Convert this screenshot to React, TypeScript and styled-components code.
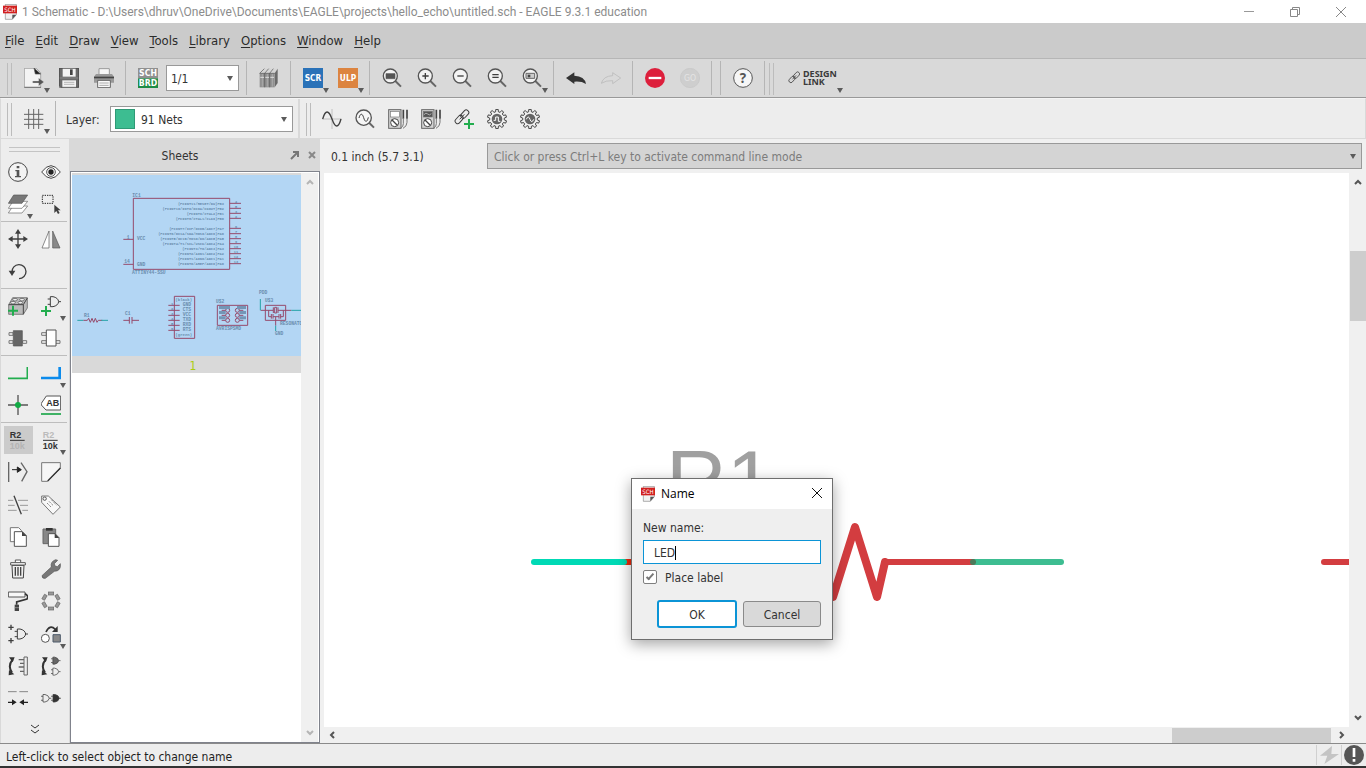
import React from "react";
import styled, { createGlobalStyle, css } from "styled-components";

const UI = `"DejaVu Sans Condensed", "DejaVu Sans", sans-serif`;
const TITLE = `Roboto, "Open Sans", sans-serif`;

const GlobalStyle = createGlobalStyle`
  *, *::before, *::after { box-sizing: border-box; }
  body { margin: 0; background: #efefef; font-family: ${UI}; font-size: 12px; color: #333; }
  button, input, select { font: inherit; color: inherit; margin: 0; padding: 0; border: 0; background: none; border-radius: 0; outline: 0; }
  svg { display: block; }
`;

/* ---------- window frame ---------- */
const Window = styled.div`
  min-height: 100vh;
  display: flex;
  flex-direction: column;
`;
const TitleBar = styled.header`
  height: 23px;
  display: flex;
  align-items: center;
  background: #fff;
  padding-left: 3px;
`;
const TitleText = styled.h1`
  flex: 1;
  margin: 0 0 0 5px;
  font: 12px/16px ${TITLE};
  color: #8c8c8c;
  white-space: nowrap;
`;
const WindowButton = styled.button`
  width: 46px;
  height: 22px;
  padding-right: 4px;
  display: grid;
  place-items: center;
`;
const MenuBar = styled.nav`
  height: 36px;
  display: flex;
  align-items: center;
  gap: 11px;
  padding-left: 5px;
  background: #cbcbcb;
  border-bottom: 1px solid #b6b6b6;
`;
const MenuButton = styled.button`
  font-size: 13px;
  line-height: 20px;
  color: #2b2b2b;
  u { text-underline-offset: 2px; }
`;

/* ---------- toolbars ---------- */
const MainToolbar = styled.div`
  height: 39px;
  display: flex;
  align-items: stretch;
  padding-left: 7px;
  background: #d9d9d9;
  border-bottom: 1px solid #999;
`;
const LayerToolbar = styled.div`
  height: 41px;
  display: flex;
  align-items: stretch;
  background: #ededed;
  border: 1px solid #d9d9d9;
  border-top-color: #f4f4f4;
`;
const LayerSection = styled.div`
  display: flex;
  align-items: stretch;
  padding: 0 5px 0 6px;
  border-right: 2px solid #d9d9d9;
`;
const WaveSection = styled.div`
  display: flex;
  padding-left: 6px;
`;
const Handle = styled.i`
  width: 5px;
  margin: 4px 4px 2px 0;
  border: solid #bcbcbc;
  border-width: 0 1px;
`;
const Divider = styled.i`
  width: 1px;
  margin: 2px 4px;
  background: #b5b5b5;
`;
const IconButton = styled.button<{ $w?: number; $h?: number; $on?: boolean }>`
  position: relative;
  width: ${(p) => p.$w ?? 35}px;
  height: ${(p) => (p.$h ? `${p.$h}px` : "auto")};
  padding-left: ${(p) => (p.$w ? 7 : 8)}px;
  display: flex;
  align-items: center;
  ${(p) =>
    p.$on &&
    css`
      margin: 2px 0 2px 3px;
      width: 29px;
      height: 28px;
      padding-left: 4px;
      background: #cbcbcb;
    `}
`;
const Drop = styled.i<{ $low?: boolean }>`
  position: absolute;
  right: 1px;
  bottom: ${(p) => (p.$low ? 1 : 4)}px;
  border: solid transparent;
  border-width: 5px 3px 0;
  border-top-color: #5b5b5b;
`;
const SelectFrame = styled.div<{ $w: number }>`
  position: relative;
  align-self: center;
  width: ${(p) => p.$w}px;
  height: 26px;
  display: flex;
  align-items: center;
  gap: 6px;
  padding-left: 4px;
  background: #fff;
  border: 1px solid #999;
`;
const SheetFrame = styled(SelectFrame)`
  margin: 0 3px 0 1px;
`;
const Select = styled.select`
  flex: 1;
  min-width: 0;
  height: 24px;
  padding-top: 2px;
  appearance: none;
  font-size: 12px;
`;
const SelectArrow = styled.i`
  position: absolute;
  right: 5px;
  top: 10px;
  border: solid transparent;
  border-width: 5px 3px 0;
  border-top-color: #5b5b5b;
  pointer-events: none;
`;
const Swatch = styled.i`
  width: 20px;
  height: 20px;
  background: #3dbd91;
  border: 1px solid #2f9a76;
`;
const LayerLabel = styled.label`
  align-self: center;
  width: 50px;
  padding: 2px 0 0 6px;
`;
const DesignLink = styled.button`
  position: relative;
  display: flex;
  align-items: center;
  gap: 3px;
  width: 66px;
  padding-left: 10px;
  font: bold 9px/8px "Noto Sans", sans-serif;
  text-align: left;
  color: #3b3b3b;
`;

/* ---------- work area ---------- */
const Work = styled.main`
  flex: 1;
  display: flex;
  align-items: stretch;
`;
const Palette = styled.aside`
  width: 70px;
  display: flex;
  flex-direction: column;
  padding: 8px 2px 0 0;
  background: #ededed;
  border: solid #d9d9d9;
  border-width: 0 1px;
`;
const PaletteHandle = styled.i`
  height: 5px;
  margin: 0 7px 4px 8px;
  border: solid #c4c4c4;
  border-width: 1px 0;
`;
const ToolGroup = styled.div<{ $last?: boolean }>`
  display: grid;
  grid-template-columns: 33px 33px;
  grid-auto-rows: 32px;
  ${(p) =>
    p.$last
      ? css`
          flex: 1;
          align-content: space-between;
        `
      : css`
          padding-bottom: 1px;
          border-bottom: 1px solid #bdbdbd;
          margin-bottom: 1px;
        `}
`;
const MoreButton = styled.button`
  height: 29px;
  padding-left: 2px;
  display: grid;
  place-items: center;
`;
const SheetsPanel = styled.section`
  width: 250px;
  display: flex;
  flex-direction: column;
`;
const SheetsHeader = styled.div`
  height: 32px;
  display: flex;
  align-items: center;
  gap: 7px;
  padding-right: 3px;
  background: #d9d9d9;
`;
const SheetsTitle = styled.h2`
  flex: 1;
  margin: 0;
  padding: 2px 0 0 7px;
  font: 12px/16px ${UI};
  text-align: center;
`;
const SmallButton = styled.button`
  width: 10px;
  height: 10px;
`;
const SheetsBody = styled.div`
  flex: 1;
  display: flex;
  background: #fff;
  border: 1px solid #80838c;
  padding: 1px 1px 0 1px;
`;
const SheetList = styled.div`
  flex: 1;
`;
const Thumbnail = styled.svg`
  width: 100%;
  height: auto;
  background: #b3d6f4;
  border-top: 2px solid #d9d9d9;
`;
const SheetNumber = styled.div`
  height: 17px;
  background: #d9d9d9;
  color: #a9cc10;
  font-size: 12px;
  line-height: 20px;
  text-align: center;
  padding-left: 13px;
`;
const Track = styled.div<{ $row?: boolean }>`
  display: flex;
  flex-direction: ${(p) => (p.$row ? "row" : "column")};
  align-items: center;
  justify-content: space-between;
  background: #f0f0f0;
  ${(p) => (p.$row ? "height: 16px; padding: 0 21px 0 4px;" : "width: 17px; padding: 5px 0 6px;")}
`;
const ThumbY = styled.div`
  width: 16px;
  height: 70px;
  margin: 65px 0 auto;
  background: #cdcdcd;
`;
const ThumbX = styled.div`
  width: 159px;
  height: 15px;
  margin: 0 6px 0 auto;
  background: #cdcdcd;
`;
const Editor = styled.section`
  flex: 1;
  min-width: 0;
  display: flex;
  flex-direction: column;
  padding-left: 4px;
  background: #f0f0f0;
`;
const CommandRow = styled.div`
  height: 34px;
  display: flex;
  align-items: center;
  padding: 0 4px 0 7px;
`;
const Coordinates = styled.output`
  width: 156px;
  padding-top: 2px;
`;
const CommandBox = styled.div`
  position: relative;
  flex: 1;
  height: 26px;
  display: flex;
  background: #d4d4d4;
  border: 1px solid #999;
`;
const CommandInput = styled.input`
  flex: 1;
  padding: 2px 0 0 6px;
  &::placeholder { color: #7c7c7c; opacity: 1; }
`;
const CanvasRow = styled.div`
  flex: 1;
  display: flex;
`;
const Canvas = styled.div`
  position: relative;
  flex: 1;
  min-width: 0;
  min-height: 500px;
  background: #fff;
`;
const Drawing = styled.svg`
  position: absolute;
  inset: 0;
  width: 100%;
  height: 100%;
`;

/* ---------- dialog ---------- */
const Dialog = styled.form`
  position: absolute;
  left: 307px;
  top: 305px;
  width: 202px;
  background: #efefef;
  border: 1px solid #6e6e6e;
  box-shadow: 0 4px 14px rgba(0, 0, 0, 0.36);
`;
const DialogTitle = styled.div`
  height: 30px;
  display: flex;
  align-items: center;
  gap: 6px;
  padding: 0 9px;
  background: #fff;
  color: #000;
  h2 { flex: 1; margin: 0; font: 12px/16px "Open Sans", sans-serif; }
`;
const CloseButton = styled.button`
  width: 12px;
  height: 12px;
  margin-bottom: 2px;
`;
const DialogBody = styled.div`
  display: flex;
  flex-direction: column;
  padding: 11px 11px 11px;
`;
const FieldLabel = styled.label`
  line-height: 16px;
  margin-bottom: 4px;
`;
const NameField = styled.div`
  height: 24px;
  display: flex;
  align-items: center;
  padding: 1px 0 0 10px;
  background: #fff;
  border: 1px solid #0b94d6;
`;
const NameInput = styled.input`
  field-sizing: content;
  caret-color: transparent;
`;
const TextCaret = styled.i`
  width: 1px;
  height: 14px;
  background: #000;
`;
const CheckRow = styled.label`
  display: flex;
  align-items: center;
  gap: 8px;
  height: 26px;
  line-height: 14px;
`;
const CheckText = styled.span`
  padding-top: 1px;
`;
const CheckBox = styled.input`
  appearance: none;
  width: 14px;
  height: 14px;
  display: grid;
  place-items: center;
  background: #fff;
  border: 1px solid #7f7f7f;
  border-radius: 2px;
  &:checked::after {
    content: "";
    width: 4px;
    height: 8px;
    margin-bottom: 2px;
    border: solid #777;
    border-width: 0 2px 2px 0;
    transform: rotate(42deg);
  }
`;
const Buttons = styled.div`
  display: flex;
  align-items: center;
  justify-content: flex-end;
  gap: 6px;
  padding-top: 10px;
`;
const DialogButton = styled.button<{ $primary?: boolean }>`
  width: ${(p) => (p.$primary ? 80 : 78)}px;
  height: ${(p) => (p.$primary ? 28 : 26)}px;
  padding-top: 2px;
  border: ${(p) => (p.$primary ? "2px solid #0b94d6" : "1px solid #8a8a8a")};
  border-radius: 3px;
  background: ${(p) => (p.$primary ? "#fff" : "#d9d9d9")};
`;

/* ---------- status bar ---------- */
const StatusBar = styled.footer`
  height: 25px;
  display: flex;
  align-items: center;
  padding-left: 6px;
  background: #ededed;
  border-top: 1px solid #8a8a8a;
  border-bottom: 2px solid #333;
`;
const StatusText = styled.span`
  flex: 1;
  padding-top: 3px;
  color: #1f1f1f;
`;
const StatusCell = styled.span`
  width: 25px;
  height: 20px;
  display: grid;
  place-items: center;
  border-left: 1px solid #d0d0d0;
`;

/* ---------- icons, all on a 60 unit grid ---------- */
const D = "#3f3f3f";
const G = "#22ad4e";

const gear = (r1: number, r2: number, n = 10) => {
  const pts: string[] = [];
  for (let i = 0; i < n; i++) {
    [[-0.3, r1], [-0.2, r2], [0.2, r2], [0.3, r1]].forEach(([o, r]) => {
      const a = ((i + o) / n) * Math.PI * 2;
      pts.push(`${30 + Math.sin(a) * r},${30 - Math.cos(a) * r}`);
    });
  }
  return pts.join(" ");
};

const Lens = ({ children }: { children?: React.ReactNode }) => (
  <>
    <path d="M40 39L57 56" stroke="#666" strokeWidth="6" />
    <circle cx="25" cy="24" r="21" fill="#f3f3f3" stroke="#555" strokeWidth="4" />
    {children}
  </>
);
const Chain = () => (
  <g fill="none" stroke={D} strokeWidth="3">
    <rect x="18" y="8" width="28" height="15" rx="7" transform="rotate(-48 32 15)" />
    <rect x="1" y="24" width="28" height="15" rx="7" transform="rotate(-48 15 31)" />
    <path d="M17 31L31 16" />
  </g>
);
const Meter = ({ screen }: { screen: string }) => (
  <>
    <rect x="2" y="2" width="37" height="56" fill="#d4d4d4" stroke="#666" strokeWidth="3" />
    <rect x="7" y="7" width="27" height="17" fill={screen} stroke="#777" strokeWidth="2" />
    <circle cx="20" cy="41" r="12" fill="#fff" stroke="#444" strokeWidth="3" />
    <path d="M12 33L28 49" stroke="#444" strokeWidth="4" />
    <path d="M46 2v27M57 2v27" stroke="#444" strokeWidth="5" />
    <path d="M46 28v16q0 10-8 13M57 28v12q0 12-12 18" fill="none" stroke="#777" strokeWidth="3" />
  </>
);
const Gate = ({ x, y, s = 1, fill = "none" }: { x: number; y: number; s?: number; fill?: string }) => (
  <g transform={`translate(${x} ${y}) scale(${s})`} fill={fill} stroke={D} strokeWidth="3">
    <path d="M8 2h8q15 3 17 15q-2 12-17 15h-8z" />
    <path d="M0 9h8M0 25h8M33 17h8" />
  </g>
);

const icons: Record<string, React.ReactNode> = {
  open: (
    <>
      <path d="M1 1h36l13 13v44H1z" fill="#f4f4f4" stroke="#8a8a8a" strokeWidth="2" />
      <path d="M30 0l20 18H34zM1 58h50" fill="#222" stroke="#555" strokeWidth="2" />
      <path d="M26 39h18v-9l16 12-16 12v-9H26z" fill="#555" stroke="#e8e8e8" strokeWidth="1" />
    </>
  ),
  save: (
    <>
      <path d="M0 0h60v59H6l-6-6z" fill="#6a6a6a" />
      <path d="M11 1h39v25H11z" fill="#f2f2f2" />
      <path d="M33 4h8v17h-8z" fill="#444" />
      <path d="M10 37h41v21H10z" fill="#f2f2f2" />
      <path d="M0 30h60M15 43h31M15 49h31" stroke="#999" strokeWidth="2" />
      <path d="M1 1h58v57H1z" fill="none" stroke="#444" strokeWidth="2" />
    </>
  ),
  print: (
    <>
      <path d="M15 2h31v18H15z" fill="#f8f8f8" stroke="#999" strokeWidth="3" />
      <path d="M6 18h48l6 8v18H0V26z" fill="#999" />
      <path d="M0 26h60v5H0z" fill="#444" />
      <path d="M11 37h38v22H11z" fill="#fafafa" stroke="#666" strokeWidth="3" />
      <path d="M16 45h28M16 52h28" stroke="#aaa" strokeWidth="3" />
    </>
  ),
  board: (
    <>
      <path d="M0 0h60v31H0z" fill="#909090" />
      <path d="M0 31h60v29H0z" fill="#1e8c45" />
      <g fill="#fff" fontFamily="DejaVu Sans Condensed" fontSize="26" fontWeight="bold" textAnchor="middle">
        <text x="30" y="25">SCH</text>
        <text x="30" y="55">BRD</text>
      </g>
    </>
  ),
  books: (
    <>
      <path d="M2 16L16 2h40l-9 14z" fill="#d5d5d5" />
      <path d="M47 16l9-14v43l-9 13z" fill="#6a6a6a" />
      <path d="M2 16h45v42H2z" fill="#909090" />
      <path d="M2 16h45M17 16v42M32 16v42M17 16L29 2M32 16L43 2M2 16L16 2" fill="none" stroke="#555" strokeWidth="2" />
      <path d="M10 18v38M25 18v38M40 18v38" stroke="#aaa" strokeWidth="3" />
      <path d="M4 28h11M19 28h11M34 28h11" stroke="#ddd" strokeWidth="3" />
    </>
  ),
  scr: (
    <>
      <path d="M0 0h60v60H0z" fill="#2a72b8" />
      <text x="30" y="39" fill="#fff" fontFamily="DejaVu Sans Condensed" fontSize="25" fontWeight="bold" textAnchor="middle">SCR</text>
    </>
  ),
  ulp: (
    <>
      <path d="M0 0h60v60H0z" fill="#dc8440" />
      <text x="30" y="39" fill="#fff" fontFamily="DejaVu Sans Condensed" fontSize="25" fontWeight="bold" textAnchor="middle">ULP</text>
    </>
  ),
  fit: <Lens><path d="M12 17h27v15H12z" fill="#555" stroke="#555" strokeWidth="2" /></Lens>,
  zoomIn: <Lens><path d="M16 24h19M25 15v19" stroke={D} strokeWidth="4" /></Lens>,
  zoomOut: <Lens><path d="M16 24h19" stroke={D} strokeWidth="4" /></Lens>,
  redraw: <Lens><path d="M16 20h19M16 28h19" stroke={D} strokeWidth="4" /></Lens>,
  zoomSel: (
    <Lens>
      <path d="M12 16h26v15H12z" fill="#ccc" stroke="#666" strokeWidth="3" />
      <path d="M17 20h8v8h-8z" fill="#444" />
    </Lens>
  ),
  undo: <path d="M0 30L25 13v10q31 1 35 25q-14-9-35-7v7z" fill="#333" />,
  redo: <path d="M59 30L35 14v9Q7 24 1 46q13-9 34-8v9z" fill="none" stroke="#b4b4b4" strokeWidth="2" />,
  stop: (
    <>
      <circle cx="30" cy="30" r="30" fill="#dd1f3c" />
      <path d="M11 30h38" stroke="#fff" strokeWidth="7" />
    </>
  ),
  go: (
    <>
      <circle cx="30" cy="30" r="29" fill="#cecece" stroke="#c6c6c6" strokeWidth="2" />
      <text x="30" y="39" fill="#e4e4e4" fontFamily="DejaVu Sans Condensed" fontSize="26" textAnchor="middle">GO</text>
    </>
  ),
  help: (
    <>
      <circle cx="30" cy="30" r="28" fill="#f6f6f6" stroke="#555" strokeWidth="3" />
      <text x="30" y="44" fill="#555" fontFamily="Noto Sans" fontSize="40" fontWeight="bold" textAnchor="middle">?</text>
    </>
  ),
  grid: <path d="M0 16h58M0 31h58M0 46h58M14 0v60M29 0v60M44 0v60" stroke="#666" strokeWidth="3" />,
  sine: (
    <>
      <path d="M1 30h58M30 0v60" stroke="#aaa" strokeWidth="2" />
      <path d="M2 30C10 2 20 2 30 30S49 58 57 30" fill="none" stroke={D} strokeWidth="4" />
    </>
  ),
  probe: (
    <>
      <path d="M43 42L57 56" stroke="#666" strokeWidth="6" />
      <circle cx="26" cy="26" r="23" fill="#f6f6f6" stroke="#555" strokeWidth="4" />
      <path d="M12 27C16 12 22 12 26 26S36 42 40 25" fill="none" stroke={D} strokeWidth="3" />
    </>
  ),
  meter: <Meter screen="#fff" />,
  meterWave: (
    <>
      <Meter screen="#555" />
      <path d="M9 17q6-8 11-2t11-1" fill="none" stroke="#ddd" strokeWidth="2" />
    </>
  ),
  linkAdd: (
    <>
      <Chain />
      <path d="M30 45h30M45 30v30" stroke={G} strokeWidth="6" />
    </>
  ),
  gearStep: (
    <>
      <polygon points={gear(22, 29)} fill="#f0f0f0" stroke="#444" strokeWidth="3" />
      <circle cx="30" cy="30" r="16" fill="#666" />
      <path d="M20 34h6V24h8v13h6" fill="none" stroke="#fff" strokeWidth="3" />
    </>
  ),
  gearWave: (
    <>
      <polygon points={gear(22, 29)} fill="#f0f0f0" stroke="#444" strokeWidth="3" />
      <circle cx="30" cy="30" r="16" fill="#666" />
      <path d="M19 31q6-14 11 0t11 0" fill="none" stroke="#fff" strokeWidth="3" />
    </>
  ),
  info: (
    <>
      <circle cx="30" cy="30" r="28" fill="#f3f3f3" stroke="#444" strokeWidth="3" />
      <path d="M26 12h8v7h-8zM22 24h12v18h5v4H21v-4h5V28h-4z" fill="#555" />
    </>
  ),
  eye: (
    <>
      <path d="M2 30Q30-8 58 30Q30 68 2 30z" fill="#f8f8f8" stroke="#444" strokeWidth="3" />
      <circle cx="30" cy="30" r="13" fill="none" stroke="#555" strokeWidth="3" />
      <circle cx="30" cy="30" r="8" fill="#222" />
    </>
  ),
  layers: (
    <g stroke="#666" strokeWidth="2">
      <path d="M1 57L15 36h44L42 57z" fill="#fff" />
      <path d="M1 43L15 22h44L42 43z" fill="#fff" />
      <path d="M1 28L17 3h42L42 28z" fill="#777" stroke="#555" />
    </g>
  ),
  group: (
    <>
      <path d="M4 4h32v24H4z" fill="none" stroke="#222" strokeWidth="3" strokeDasharray="4 3" />
      <path d="M40 32v25l6-6 5 9 5-3-5-8h8z" fill={D} />
    </>
  ),
  move: (
    <>
      <path d="M30 8v44M8 30h44" stroke={D} strokeWidth="4" />
      <path d="M30 0l9 14H21zM30 60l9-14H21zM0 30l14-9v18zM60 30l-14-9v18z" fill={D} />
    </>
  ),
  mirror: (
    <>
      <path d="M3 57L24 6v51z" fill="#fff" stroke="#555" strokeWidth="2" />
      <path d="M57 57L35 6v51z" fill="#888" stroke="#555" strokeWidth="2" />
    </>
  ),
  rotate: (
    <>
      <path d="M12 33a21 21 0 1 1 21 20" fill="none" stroke={D} strokeWidth="4" />
      <path d="M2 29h20L12 45z" fill={D} />
    </>
  ),
  addPart: (
    <>
      <path d="M2 26L14 5h44v31L46 55H2z" fill="#bbb" stroke="#555" strokeWidth="2" />
      <path d="M2 26h44v29M46 26L58 6" fill="none" stroke="#444" strokeWidth="3" />
      <ellipse cx="21" cy="11" rx="7" ry="4" fill="#eee" stroke="#444" strokeWidth="2" />
      <ellipse cx="42" cy="11" rx="7" ry="4" fill="#eee" stroke="#444" strokeWidth="2" />
      <ellipse cx="15" cy="20" rx="7" ry="4" fill="#eee" stroke="#444" strokeWidth="2" />
      <ellipse cx="37" cy="20" rx="7" ry="4" fill="#eee" stroke="#444" strokeWidth="2" />
      <path d="M0 44h30M15 29v30" stroke={G} strokeWidth="6" />
    </>
  ),
  addGate: (
    <>
      <Gate x={20} y={0} />
      <path d="M0 45h30M15 30v30" stroke={G} strokeWidth="6" />
    </>
  ),
  chip: (
    <>
      <path d="M3 14h12v8H3zM3 38h12v8H3zM44 38h12v8H44z" fill="none" stroke="#777" strokeWidth="3" />
      <path d="M16 8h27v46H16z" fill="#666" stroke="#555" strokeWidth="2" />
    </>
  ),
  chipOutline: (
    <>
      <path d="M2 14h14v8H2zM2 38h14v8H2zM44 38h13v8H44z" fill="none" stroke="#777" strokeWidth="3" />
      <path d="M16 6h29v48H16z" fill="#fff" stroke="#555" strokeWidth="3" />
    </>
  ),
  net: <path d="M0 46h58V12" fill="none" stroke={G} strokeWidth="5" />,
  bus: <path d="M0 45h56V12" fill="none" stroke="#0c8bec" strokeWidth="8" />,
  junction: (
    <>
      <path d="M0 30h60M30 0v60" stroke="#555" strokeWidth="4" />
      <circle cx="30" cy="30" r="9" fill="#12ab45" />
    </>
  ),
  label: (
    <>
      <path d="M1 25L16 3h43v42H15L1 30z" fill="#fff" stroke="#555" strokeWidth="3" />
      <text x="35" y="34" fill="#333" fontFamily="Liberation Sans" fontSize="27" fontWeight="bold" textAnchor="middle">AB</text>
      <path d="M0 57h60" stroke="#1ca64a" strokeWidth="5" />
    </>
  ),
  name: (
    <g fontFamily="Liberation Sans" fontSize="27" fontWeight="bold">
      <text x="5" y="25" fill="#333">R2</text>
      <path d="M6 31h44" stroke="#333" strokeWidth="3" />
      <text x="5" y="56" fill="#b4b4b4">10k</text>
    </g>
  ),
  value: (
    <g fontFamily="Liberation Sans" fontSize="27" fontWeight="bold">
      <text x="5" y="25" fill="#bbb">R2</text>
      <path d="M6 31h44" stroke="#333" strokeWidth="3" />
      <text x="5" y="56" fill="#333">10k</text>
    </g>
  ),
  split: (
    <>
      <path d="M2 0v60M39 2l18 27-16 29" fill="none" stroke="#666" strokeWidth="4" />
      <path d="M12 23h16M28 15l12 8-12 8z" fill="#222" stroke="#222" strokeWidth="3" />
    </>
  ),
  miter: (
    <>
      <path d="M2 2h56v18L20 58H2z" fill="#f6f6f6" stroke="#777" strokeWidth="3" />
      <path d="M58 18L20 57" stroke="#333" strokeWidth="4" />
    </>
  ),
  erase: (
    <>
      <path d="M0 16h16M0 31h20M0 46h26M30 16h30M36 31h24M43 46h17" stroke="#999" strokeWidth="3" />
      <path d="M18 2l22 56" stroke={D} strokeWidth="4" />
    </>
  ),
  tag: (
    <>
      <path d="M2 3h20l36 33-22 22L2 22z" fill="#f8f8f8" stroke="#777" strokeWidth="3" />
      <circle cx="11" cy="11" r="5" fill="none" stroke="#555" strokeWidth="3" />
      <path d="M18 24l14 14M24 19l14 14M31 14l16 17" stroke="#555" strokeWidth="2" strokeDasharray="7 3" />
    </>
  ),
  copy: (
    <>
      <path d="M7 2h25l8 8v34H7z" fill="#fff" stroke="#777" strokeWidth="3" />
      <path d="M19 14h24l12 12v32H19z" fill="#fff" stroke="#555" strokeWidth="3" />
      <path d="M42 13l14 14H42z" fill="#444" />
    </>
  ),
  paste: (
    <>
      <path d="M6 6h38v44H6z" fill="#888" stroke="#666" strokeWidth="3" />
      <path d="M15 3h20v8H15z" fill="#333" />
      <path d="M22 20h20l12 12v26H22z" fill="#fff" stroke="#555" strokeWidth="3" />
      <path d="M41 19l14 14H41z" fill="#444" />
    </>
  ),
  trash: (
    <>
      <path d="M12 19l2 38h32l2-38z" fill="#eee" stroke="#444" strokeWidth="3" />
      <path d="M8 11h44v7H8zM22 10V3h16v7" fill="#fff" stroke="#555" strokeWidth="3" />
      <path d="M22 24v26M30 24v26M38 24v26" stroke="#444" strokeWidth="4" />
    </>
  ),
  wrench: <path d="M3 50L31 24Q27 8 44 2l6 2-10 10 2 7 7 2 9-9q3 22-18 23L13 58Q3 60 3 50z" fill="#777" stroke="#555" strokeWidth="2" />,
  paint: (
    <>
      <path d="M1 3h50v15H1z" fill="#f8f8f8" stroke="#555" strokeWidth="3" />
      <path d="M51 8q12 6 6 16L26 33v8" fill="none" stroke="#333" strokeWidth="5" />
      <path d="M20 41h13v19H20z" fill="#444" />
      <path d="M20 50h13" stroke="#aaa" strokeWidth="2" />
    </>
  ),
  ring: (
    <g fill="#999" stroke="#666" strokeWidth="2">
      {[0, 60, 120, 180, 240, 300].map((a) => (
        <rect key={a} x="22" y="3" width="16" height="9" transform={`rotate(${a} 30 30)`} />
      ))}
    </g>
  ),
  invoke: (
    <>
      <path d="M1 10h16M9 2v16M1 50h16M9 42v16" stroke={D} strokeWidth="4" />
      <Gate x={20} y={13} />
    </>
  ),
  replace: (
    <>
      <circle cx="13" cy="43" r="12" fill="#fff" stroke="#555" strokeWidth="3" />
      <path d="M36 32h22v22H36z" fill="#888" stroke="#4d5b6b" strokeWidth="3" />
      <path d="M15 24Q26 0 43 16" fill="none" stroke="#333" strokeWidth="5" />
      <path d="M50 6v18H33z" fill="#333" />
    </>
  ),
  pinSwap: (
    <>
      <path d="M14 10Q-2 30 12 50" fill="none" stroke="#333" strokeWidth="6" />
      <path d="M3 4l17 0-6 15zM3 42l16 13-17 3z" fill="#333" />
      <path d="M48 3h10v54H48z" fill="#eee" stroke="#666" strokeWidth="3" />
      <path d="M32 11h16M36 22h12M32 33h16M36 46h12" stroke="#666" strokeWidth="4" />
    </>
  ),
  gateSwap: (
    <>
      <path d="M14 10Q-2 30 12 50" fill="none" stroke="#333" strokeWidth="6" />
      <path d="M3 4l17 0-6 15zM3 42l16 13-17 3z" fill="#333" />
      <Gate x={30} y={2} s={0.7} fill="#666" />
      <Gate x={30} y={35} s={0.7} />
    </>
  ),
  optimize: (
    <>
      <path d="M0 11h26M34 11h26" stroke="#888" strokeWidth="3" />
      <path d="M0 43h14M46 43h14" stroke="#222" strokeWidth="4" />
      <path d="M12 34l14 9-14 9zM48 34L34 43l14 9z" fill="#222" />
    </>
  ),
  module: (
    <>
      <Gate x={0} y={18} s={0.75} />
      <Gate x={30} y={18} s={0.75} fill="#333" />
    </>
  ),
};

const Icon = ({ name, size = 20 }: { name: string; size?: number }) => (
  <svg width={size} height={size} viewBox="0 0 60 60" aria-hidden="true">
    {icons[name]}
  </svg>
);

const SchIcon = () => (
  <svg width="14" height="16" viewBox="0 0 42 48" aria-hidden="true">
    <path d="M7 1h33v31L28 46H7z" fill="#f1f1f1" stroke="#8a8a8a" strokeWidth="2" />
    <path d="M28 46V32h12z" fill="#555" />
    <path d="M0 5h42v23H0z" fill="#d1201f" />
    <text x="21" y="23" fill="#fff" fontFamily="DejaVu Sans Condensed" fontSize="18" textAnchor="middle">SCH</text>
  </svg>
);

const Arrow = ({ dir, color = "#555" }: { dir: "up" | "down" | "left" | "right"; color?: string }) => {
  const d = { up: "M1 6l3-3 3 3", down: "M1 3l3 3 3-3", left: "M6 1L3 4l3 3", right: "M3 1l3 3-3 3" }[dir];
  return (
    <svg width="8" height="8" viewBox="0 0 8 8" aria-hidden="true">
      <path d={d} fill="none" stroke={color} strokeWidth="2" />
    </svg>
  );
};

/* ---------- sheet preview ---------- */
const pins: [number, string, string][] = [
  [190, "(PCINT11/RESET/DW)PB3", "4"],
  [205, "(PCINT10/INT0/OC0A/CKOUT)PB2", "5"],
  [220, "(PCINT9/XTAL2)PB1", "3"],
  [235, "(PCINT8/XTAL1/CLKI)PB0", "2"],
  [265, "(PCINT7/ICP/OC0B/ADC7)PA7", "6"],
  [281, "(PCINT6/OC1A/SDA/MOSI/ADC6)PA6", "7"],
  [296, "(PCINT5/OC1B/MISO/DO/ADC5)PA5", "8"],
  [311, "(PCINT4/T1/SCL/USCK/ADC4)PA4", "9"],
  [326, "(PCINT3/T0/ADC3)PA3", "10"],
  [341, "(PCINT2/AIN1/ADC2)PA2", "11"],
  [356, "(PCINT1/AIN0/ADC1)PA1", "12"],
  [371, "(PCINT0/AREF/ADC0)PA0", "13"],
];

const SheetPreview = () => (
  <Thumbnail viewBox="6 105 687 543" role="img" aria-label="Sheet 1 preview">
    <g fill="none" stroke="#964a6b" strokeWidth="3">
      <path d="M190 175h289v213H190zM160 298h30M160 373h30" />
      {pins.map(([y]) => (
        <path key={y} d={`M479 ${y}h34`} />
      ))}
      <path d="M40 541h12l4-6 5 12 5-12 5 12 5-12 5 12 4-6h12M160 541h18M178 531v20M186 531v20M186 541h21" />
      <path d="M313 469h61v126h-61z" />
      <path d="M295 496h34M295 511h34M295 526h34M295 541h34M295 556h34M295 571h34" />
      <path d="M442 496h91v60h-91z" />
      {[511, 526, 541].map((y) => (
        <React.Fragment key={y}>
          <circle cx="473" cy={y} r="6" />
          <circle cx="502" cy={y} r="6" />
          <path d={`M455 ${y}h12M508 ${y}h12`} />
        </React.Fragment>
      ))}
      <path d="M586 496h61v45h-61zM572 511h38M624 511h40M610 502v17M624 502v17M614 502h6v17h-6zM596 511v19h8M604 522v14M609 522v14M609 530h18M627 522v14M632 522v14M632 530h8v-19M617 530v27" />
    </g>
    <g fill="none" stroke="#25a3a8" strokeWidth="3">
      <path d="M22 541h18M94 541h20M571 477v34M664 511h29M617 557v16" />
    </g>
    <path d="M447 498h33v9h-33zM501 498h27v9h-27zM447 513h20v9h-20zM508 513h20v9h-20zM447 529h20v9h-20zM508 529h20v9h-20z" fill="#7396b6" />
    <g fill="#6a8dae" fontFamily="Liberation Mono" fontSize="14" fontWeight="bold">
      {pins.map(([y, t, n]) => (
        <React.Fragment key={y}>
          <text x="462" y={y + 4} textAnchor="end" fontSize="11">{t}</text>
          <text x="498" y={y - 2} textAnchor="middle" fontSize="11">{n}</text>
        </React.Fragment>
      ))}
      <text x="187" y="171">IC1</text>
      <text x="201" y="300">VCC</text>
      <text x="201" y="378">GND</text>
      <text x="170" y="296">1</text>
      <text x="163" y="370">14</text>
      <text x="186" y="402">ATTINY44-SSU</text>
      <text x="42" y="531">R1</text>
      <text x="165" y="525">C1</text>
      <text x="316" y="483" fontSize="12">(black)</text>
      <text x="338" y="498">GND</text>
      <text x="338" y="513">CTS</text>
      <text x="338" y="528">VCC</text>
      <text x="338" y="544">TXD</text>
      <text x="338" y="558">RXD</text>
      <text x="338" y="573">RTS</text>
      <text x="316" y="588" fontSize="12">(green)</text>
      {[1, 2, 3, 4, 5, 6].map((n) => (
        <text key={n} x="303" y={479 + n * 15} fontSize="12">{n}</text>
      ))}
      <text x="438" y="488">U$2</text>
      <text x="438" y="570">AVRISPSMD</text>
      <text x="567" y="461">PDD</text>
      <text x="585" y="485">U$3</text>
      <text x="630" y="554">RESONATOR</text>
      <text x="615" y="584">GND</text>
    </g>
  </Thumbnail>
);

/* ---------- content ---------- */
const menus = ["File", "Edit", "Draw", "View", "Tools", "Library", "Options", "Window", "Help"];

type Tool = [icon: string, label: string, drop?: boolean];
const toolGroups: (Tool | null)[][] = [
  [["info", "Info"], ["eye", "Show"], ["layers", "Layers", true], ["group", "Group"]],
  [["move", "Move"], ["mirror", "Mirror"], ["rotate", "Rotate"], null],
  [["addPart", "Add part"], ["addGate", "Add gate", true], ["chip", "Package"], ["chipOutline", "Symbol"]],
  [["net", "Net"], ["bus", "Bus", true], ["junction", "Junction"], ["label", "Label"]],
  [
    ["name", "Name"], ["value", "Value", true], ["split", "Split"], ["miter", "Miter"],
    ["erase", "Rip up"], ["tag", "Attribute"], ["copy", "Copy"], ["paste", "Paste"],
    ["trash", "Delete"], ["wrench", "Change"], ["paint", "Paint"], ["ring", "Array"],
    ["invoke", "Invoke"], ["replace", "Replace", true], ["pinSwap", "Pin swap"], ["gateSwap", "Gate swap"],
    ["optimize", "Optimize"], ["module", "Module"],
  ],
];
const waveTools: Tool[] = [
  ["sine", "Simulate"], ["probe", "Probe"], ["meter", "Meter"], ["meterWave", "Scope"],
  ["linkAdd", "Add link"], ["gearStep", "Step setup"], ["gearWave", "Wave setup"],
];

const Tools = ({ items, width }: { items: Tool[]; width?: number }) => (
  <>
    {items.map(([icon, label, drop]) => (
      <IconButton key={icon} aria-label={label} $w={width}>
        <Icon name={icon} />
        {drop && <Drop />}
      </IconButton>
    ))}
  </>
);

export default function App() {
  return (
    <>
      <GlobalStyle />
      <Window>
        <TitleBar>
          <SchIcon />
          <TitleText>
            1 Schematic - D:\Users\dhruv\OneDrive\Documents\EAGLE\projects\hello_echo\untitled.sch - EAGLE 9.3.1 education
          </TitleText>
          <WindowButton aria-label="Minimize">
            <svg width="10" height="10"><path d="M0 4.500h10" stroke="#999" /></svg>
          </WindowButton>
          <WindowButton aria-label="Restore">
            <svg width="10" height="10" fill="none" stroke="#888"><path d="M.5 2.500h7v7h-7zM2.500 2.500v-2h7v7h-2" /></svg>
          </WindowButton>
          <WindowButton aria-label="Close">
            <svg width="10" height="10"><path d="M0 0l10 10M10 0L0 10" stroke="#888" /></svg>
          </WindowButton>
        </TitleBar>

        <MenuBar>
          {menus.map((m) => (
            <MenuButton key={m}><u>{m[0]}</u>{m.slice(1)}</MenuButton>
          ))}
        </MenuBar>

        <MainToolbar>
          <Handle />
          <Tools items={[["open", "Open", true], ["save", "Save"], ["print", "Print"]]} />
          <Divider />
          <Tools items={[["board", "Switch to board"]]} />
          <SheetFrame $w={73}>
            <Select aria-label="Sheet"><option>1/1</option></Select>
            <SelectArrow />
          </SheetFrame>
          <Divider />
          <Tools items={[["books", "Libraries"]]} />
          <Divider />
          <Tools items={[["scr", "Run script", true], ["ulp", "Run ULP", true]]} />
          <Divider />
          <Tools items={[["fit", "Zoom to fit"], ["zoomIn", "Zoom in"], ["zoomOut", "Zoom out"], ["redraw", "Redraw"], ["zoomSel", "Zoom select", true]]} />
          <Divider />
          <Tools items={[["undo", "Undo"], ["redo", "Redo"]]} />
          <Divider />
          <Tools items={[["stop", "Stop"], ["go", "Go"]]} />
          <Divider />
          <Divider />
          <Tools items={[["help", "Help"]]} />
          <Divider />
          <Handle />
          <DesignLink>
            <svg width="12" height="14" viewBox="0 0 46 52" aria-hidden="true"><Chain /></svg>
            <span>DESIGN<br />LINK</span>
            <Drop />
          </DesignLink>
        </MainToolbar>

        <LayerToolbar>
          <LayerSection>
            <Handle />
            <Tools items={[["grid", "Grid", true]]} />
            <Divider />
            <LayerLabel htmlFor="layer">Layer:</LayerLabel>
            <SelectFrame $w={183}>
              <Swatch />
              <Select id="layer"><option>91 Nets</option></Select>
              <SelectArrow />
            </SelectFrame>
          </LayerSection>
          <WaveSection>
            <Handle />
            <Tools width={33} items={waveTools} />
          </WaveSection>
        </LayerToolbar>

        <Work>
          <Palette>
            <PaletteHandle />
            {toolGroups.map((group, g) => (
              <ToolGroup key={g} $last={g === toolGroups.length - 1}>
                {group.map((t) =>
                  t ? (
                    <IconButton key={t[0]} aria-label={t[1]} $w={33} $h={32} $on={t[0] === "name"}>
                      <Icon name={t[0]} />
                      {t[2] && <Drop $low />}
                    </IconButton>
                  ) : (
                    <span key="blank" />
                  )
                )}
              </ToolGroup>
            ))}
            <MoreButton aria-label="More tools">
              <svg width="10" height="10"><path d="M1 1l4 3 4-3M1 6l4 3 4-3" fill="none" stroke="#333" strokeWidth="1" /></svg>
            </MoreButton>
          </Palette>

          <SheetsPanel>
            <SheetsHeader>
              <SheetsTitle>Sheets</SheetsTitle>
              <SmallButton aria-label="Detach">
                <svg width="10" height="10"><path d="M1 9l6-6M3 2h5v5" fill="none" stroke="#777" strokeWidth="2" /></svg>
              </SmallButton>
              <SmallButton aria-label="Close panel">
                <svg width="10" height="10"><path d="M2 2l6 6M8 2l-6 6" stroke="#888" strokeWidth="2" /></svg>
              </SmallButton>
            </SheetsHeader>
            <SheetsBody>
              <SheetList>
                <SheetPreview />
                <SheetNumber>1</SheetNumber>
              </SheetList>
              <Track>
                <Arrow dir="up" color="#b5b5b5" />
                <Arrow dir="down" color="#b5b5b5" />
              </Track>
            </SheetsBody>
          </SheetsPanel>

          <Editor>
            <CommandRow>
              <Coordinates>0.1 inch (5.7 3.1)</Coordinates>
              <CommandBox>
                <CommandInput aria-label="Command line" placeholder="Click or press Ctrl+L key to activate command line mode" />
                <SelectArrow />
              </CommandBox>
            </CommandRow>
            <CanvasRow>
              <Canvas>
                <Drawing role="img" aria-label="Resistor R1 and nets">
                  <g transform="translate(-324 -173)" fill="none" strokeWidth="6" strokeLinecap="round" strokeLinejoin="round">
                    <text x="666" y="509" fill="#a0a0a0" fontFamily="Liberation Sans" fontSize="84">R1</text>
                    <path d="M624 562h60" stroke="#ee2a0c" />
                    <path d="M534 562h90" stroke="#00d9b5" />
                    <path d="M973 562h88" stroke="#3dbd91" />
                    <path d="M885 562h87" stroke="#d33d40" />
                    <path d="M822 562l11 35 22-70 22 70 8-35" stroke="#d33d40" strokeWidth="8" />
                    <path d="M973 562h0" stroke="#4c7a5a" />
                    <path d="M1324 562h60" stroke="#d33d40" />
                  </g>
                </Drawing>
                <Dialog role="dialog" aria-labelledby="dialog-title" onSubmit={(e) => e.preventDefault()}>
                  <DialogTitle>
                    <SchIcon />
                    <h2 id="dialog-title">Name</h2>
                    <CloseButton type="button" aria-label="Close dialog">
                      <svg width="12" height="12"><path d="M1 1l10 10M11 1L1 11" stroke="#111" /></svg>
                    </CloseButton>
                  </DialogTitle>
                  <DialogBody>
                    <FieldLabel htmlFor="new-name">New name:</FieldLabel>
                    <NameField>
                      <NameInput id="new-name" defaultValue="LED" />
                      <TextCaret />
                    </NameField>
                    <CheckRow>
                      <CheckBox type="checkbox" defaultChecked />
                      <CheckText>Place label</CheckText>
                    </CheckRow>
                    <Buttons>
                      <DialogButton $primary>OK</DialogButton>
                      <DialogButton type="button">Cancel</DialogButton>
                    </Buttons>
                  </DialogBody>
                </Dialog>
              </Canvas>
              <Track>
                <Arrow dir="up" />
                <ThumbY />
                <Arrow dir="down" />
              </Track>
            </CanvasRow>
            <Track $row>
              <Arrow dir="left" />
              <ThumbX />
              <Arrow dir="right" />
            </Track>
          </Editor>
        </Work>

        <StatusBar>
          <StatusText>Left-click to select object to change name</StatusText>
          <StatusCell>
            <svg width="19" height="18" viewBox="0 0 57 54"><path d="M36 0L0 29h22l-9 25L57 24H34z" fill="#c4c4c4" /></svg>
          </StatusCell>
          <StatusCell>
            <svg width="20" height="20" viewBox="0 0 60 60"><circle cx="30" cy="30" r="30" fill="#555" /><path d="M26 9h8v27h-8zM26 42h8v8h-8z" fill="#fff" /></svg>
          </StatusCell>
        </StatusBar>
      </Window>
    </>
  );
}
